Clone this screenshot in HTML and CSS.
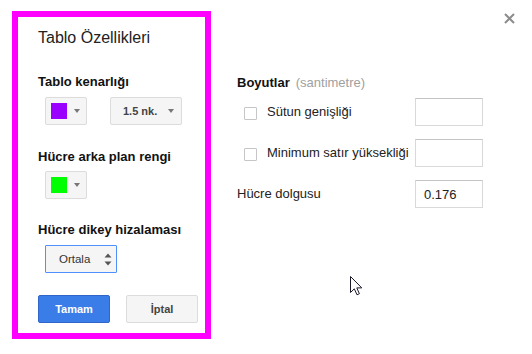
FILE: index.html
```html
<!DOCTYPE html>
<html lang="tr">
<head>
<meta charset="utf-8">
<title>Tablo Özellikleri</title>
<link rel="stylesheet" href="styles.css">
</head>
<body>
<div class="page">
  <div class="panel">
    <div class="title">Tablo Özellikleri</div>

    <div class="label l1">Tablo kenarlığı</div>
    <div class="ctrl-row r1">
      <div class="color-btn">
        <span class="swatch purple"></span>
        <span class="caret"></span>
      </div>
      <div class="drop-btn">
        <span class="drop-text">1.5 nk.</span>
        <span class="caret"></span>
      </div>
    </div>

    <div class="label l2">Hücre arka plan rengi</div>
    <div class="ctrl-row r2">
      <div class="color-btn">
        <span class="swatch green"></span>
        <span class="caret"></span>
      </div>
    </div>

    <div class="label l3">Hücre dikey hizalaması</div>
    <div class="ctrl-row r3">
      <div class="select">
        <span class="select-text">Ortala</span>
        <span class="spinner">
          <svg width="8" height="13" viewBox="0 0 8 13"><path d="M4 0.5 L7.5 4.5 L0.5 4.5 Z M4 12.5 L7.5 8.5 L0.5 8.5 Z" fill="#555"/></svg>
        </span>
      </div>
    </div>

    <div class="actions">
      <div class="btn primary">Tamam</div>
      <div class="btn secondary">İptal</div>
    </div>
  </div>

  <div class="right">
    <div class="sec-head"><span class="sec-title">Boyutlar</span><span class="sec-unit">(santimetre)</span></div>
    <div class="field">
      <span class="check"></span>
      <span class="field-label">Sütun genişliği</span>
      <span class="input"></span>
    </div>
    <div class="field">
      <span class="check"></span>
      <span class="field-label">Minimum satır yüksekliği</span>
      <span class="input"></span>
    </div>
    <div class="field">
      <span class="field-label plain">Hücre dolgusu</span>
      <span class="input">0.176</span>
    </div>
  </div>
</div>

<div class="watermark">dijitalders.com</div>

<div class="close">
  <svg width="11" height="11" viewBox="0 0 11 11"><path d="M1 1 L10 10 M10 1 L1 10" stroke="#8c8c8c" stroke-width="2"/></svg>
</div>

<div class="cursor">
  <svg width="13" height="20" viewBox="0 0 13 20"><path d="M0.5 0.5 L0.5 16.5 L4.3 12.8 L7 18.8 L9.4 17.7 L6.8 11.9 L11.8 11.9 Z" fill="#fff" stroke="#1a1a2a" stroke-width="1" stroke-linejoin="miter"/></svg>
</div>
</body>
</html>
```

FILE: styles.css
```css
html, body {
  margin: 0;
  padding: 0;
  background: #fff;
}
body {
  font-family: "Liberation Sans", Arial, sans-serif;
  color: #222;
  width: 532px;
  height: 354px;
  overflow: hidden;
}
.page {
  display: flex;
  align-items: flex-start;
  padding: 11px 0 0 12px;
}
.panel {
  box-sizing: border-box;
  width: 199px;
  height: 328px;
  border: 6px solid #ff00ff;
  padding: 12px 0 0 20px;
  display: flex;
  flex-direction: column;
  align-items: flex-start;
}
.title {
  font-size: 16px;
  line-height: 18px;
  color: #222;
}
.label {
  font-size: 13px;
  line-height: 15px;
  font-weight: bold;
  color: #111;
}
.l1 { margin-top: 27px; }
.l2 { margin-top: 24px; }
.l3 { margin-top: 23px; }
.ctrl-row {
  display: flex;
  gap: 23px;
  margin-left: 7px;
}
.r1 { margin-top: 8px; }
.r2 { margin-top: 7px; }
.r3 { margin-top: 8px; }
.color-btn, .drop-btn {
  box-sizing: border-box;
  height: 28px;
  background: #f5f5f5;
  border: 1px solid #dcdcdc;
  border-radius: 2px;
  display: flex;
  align-items: center;
}
.color-btn {
  width: 42px;
  padding-left: 5px;
}
.swatch {
  width: 16px;
  height: 16px;
  display: block;
}
.purple { background: #9900ff; }
.green { background: #00ff00; }
.caret {
  width: 0;
  height: 0;
  border-left: 3.5px solid transparent;
  border-right: 3.5px solid transparent;
  border-top: 4px solid #777;
  margin-left: 7px;
}
.drop-btn {
  width: 72px;
  padding-left: 12px;
}
.drop-text {
  font-size: 11px;
  font-weight: bold;
  color: #444;
  width: 45px;
}
.drop-btn .caret { margin-left: 0; }
.select {
  box-sizing: border-box;
  width: 72px;
  height: 28px;
  background: #f5f5f5;
  border: 1px solid #4d90fe;
  border-radius: 1px;
  display: flex;
  align-items: center;
  padding-left: 13px;
}
.select-text {
  font-size: 11.5px;
  color: #333;
  width: 45px;
}
.spinner {
  display: flex;
}
.actions {
  display: flex;
  gap: 16px;
  margin-top: 22px;
}
.btn {
  box-sizing: border-box;
  width: 72px;
  height: 28px;
  border-radius: 2px;
  font-size: 11px;
  font-weight: bold;
  display: flex;
  align-items: center;
  justify-content: center;
}
.primary {
  background: #3b7de8;
  border: 1px solid #3066c8;
  color: #fff;
}
.secondary {
  background: #f5f5f5;
  border: 1px solid #dcdcdc;
  color: #444;
}
.right {
  width: 246px;
  margin-left: 26px;
  padding-top: 64px;
  display: flex;
  flex-direction: column;
  gap: 13px;
}
.sec-head {
  font-size: 13px;
  line-height: 15px;
  margin-bottom: -5px;
}
.sec-title {
  font-weight: bold;
  color: #111;
}
.sec-unit {
  color: #a0a0a0;
  margin-left: 6px;
}
.field {
  display: flex;
  align-items: flex-start;
  height: 28px;
  font-size: 13px;
  line-height: 15px;
}
.check {
  box-sizing: border-box;
  width: 13px;
  height: 13px;
  border: 1px solid #c6c6c6;
  border-radius: 1px;
  background: #fff;
  margin: 9px 10px 0 7px;
}
.field-label {
  margin-top: 6px;
  flex: 1;
  color: #222;
}
.input {
  box-sizing: border-box;
  width: 68px;
  height: 28px;
  border: 1px solid #d9d9d9;
  border-top-color: #c4c4c4;
  background: #fff;
  padding: 6px 0 0 8px;
  font-size: 13px;
  line-height: 15px;
  color: #222;
}
.watermark {
  position: absolute;
  left: 167px;
  top: 244px;
  font-size: 22px;
  line-height: 22px;
  font-weight: bold;
  color: #f7f7f7;
  z-index: -1;
}
.close {
  position: absolute;
  left: 504px;
  top: 13px;
  width: 11px;
  height: 11px;
  display: flex;
}
.cursor {
  position: absolute;
  left: 350px;
  top: 276px;
  display: flex;
}
```
